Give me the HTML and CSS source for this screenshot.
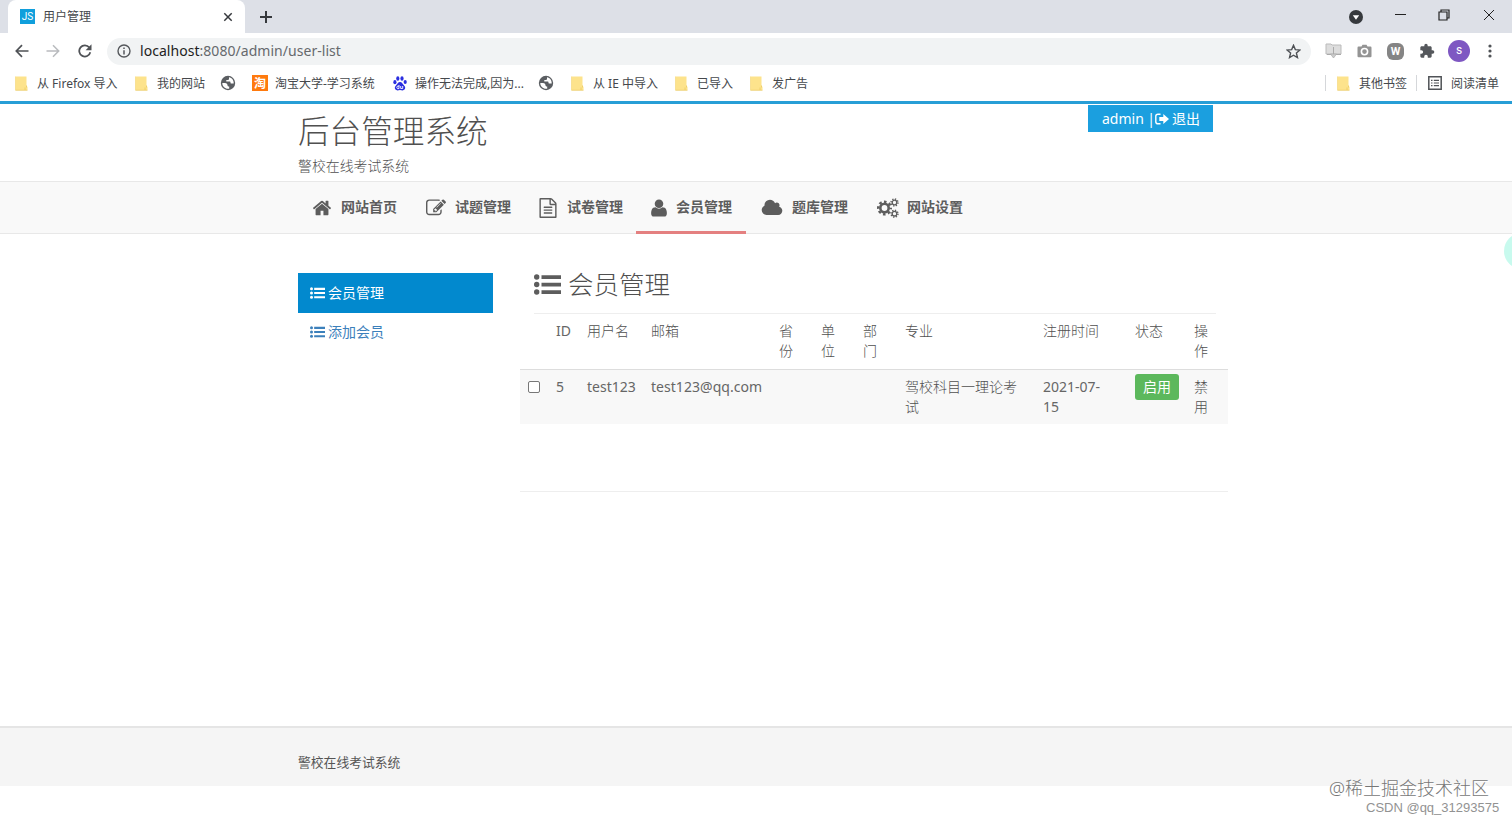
FILE: index.html
```html
<!DOCTYPE html>
<html lang="zh-CN">
<head>
<meta charset="utf-8">
<title>用户管理</title>
<link rel="stylesheet" href="styles.css">
</head>
<body>
<svg class="defs" width="0" height="0">
  <symbol id="folder" viewBox="0 0 13 15"><path d="M.5.5h11v9l1 1.500v3h-12z" fill="#fde38c"/><path d="M.5 14.300h12M11.500 9.500v2M10 14v-2.500" stroke="#eccb62" stroke-width=".8" fill="none"/><path d="M.4.500v13.800" stroke="#f3d678" stroke-width=".7"/></symbol>
  <symbol id="globe" viewBox="0 0 16 16"><circle cx="8" cy="8" r="7.200" fill="#5b5e62"/><path d="M2.300 8h2.600c1.900 0 2.600 1 2.600 2.300 0 1 .8 1.200 1.700 1.200v2.200C5.500 14.400 2.200 11.600 2.300 8zM9 2.300v1.400c0 .8-.6 1.300-1.400 1.300H6.300v1.500H9.500c.8 0 1 .5 1 1.300 0 .6.700.8 1.300.8h1.900C14 5.400 11.800 2.700 9 2.300z" fill="#fff"/></symbol>
  <symbol id="list" viewBox="0 0 27 21"><circle cx="2.700" cy="3" r="2.700"/><circle cx="2.700" cy="10.500" r="2.700"/><circle cx="2.700" cy="18" r="2.700"/><path d="M7.500 1.200H27v3.700H7.500zM7.500 8.700H27v3.700H7.500zM7.500 16.200H27v3.700H7.500z"/></symbol>
</svg>

<header class="browser">
  <div class="tabstrip">
    <div class="tab">
      <span class="favicon">JS</span>
      <span class="tab-title">用户管理</span>
      <svg class="tab-close" viewBox="0 0 10 10"><path d="M1.300 1.300l7.400 7.400M8.700 1.300L1.300 8.700" stroke="#36393d" stroke-width="1.500"/></svg>
    </div>
    <svg class="tab-new" viewBox="0 0 12 12"><path d="M6 0v12M0 6h12" stroke="#36393d" stroke-width="2"/></svg>
    <div class="window-buttons">
      <svg class="w-menu" viewBox="0 0 14 14"><circle cx="7" cy="7" r="7" fill="#36393d"/><path d="M3.800 5.200h6.400L7 9.700z" fill="#fff"/></svg>
      <svg class="w-min" viewBox="0 0 11 12"><path d="M0 5.500h11" stroke="#222"/></svg>
      <svg class="w-max" viewBox="0 0 12 12"><path d="M1 3h8v8H1zM3 3V1h8v8H9" fill="none" stroke="#222" stroke-width="1.200"/></svg>
      <svg class="w-close" viewBox="0 0 12 12"><path d="M1 1l10 10M11 1L1 11" stroke="#222"/></svg>
    </div>
  </div>
  <div class="toolbar">
    <svg class="t-back" viewBox="0 0 14 14"><path d="M13.500 7H1.500M7 1.200L1.300 7 7 12.800" fill="none" stroke="#4f5256" stroke-width="1.700"/></svg>
    <svg class="t-fwd" viewBox="0 0 14 14"><path d="M.5 7h12M7 1.200L12.700 7 7 12.800" fill="none" stroke="#b9bbbe" stroke-width="1.500"/></svg>
    <svg class="t-reload" viewBox="0 0 14 14"><path d="M12.300 8.300A5.600 5.600 0 1 1 11.300 3.500" fill="none" stroke="#505357" stroke-width="1.800"/><path d="M13.500.3v6H7.600z" fill="#505357"/></svg>
    <div class="omnibox">
      <svg class="o-info" viewBox="0 0 14 14"><circle cx="7" cy="7" r="6" fill="none" stroke="#55585c" stroke-width="1.400"/><path d="M7 6.200v4.200M7 3.400v1.500" stroke="#55585c" stroke-width="1.500"/></svg>
      <span class="url"><b>localhost</b>:8080/admin/user-list</span>
      <svg class="o-star" viewBox="0 0 14 14"><path d="M7 1.200l1.700 4 4.300.400-3.300 2.800 1 4.300L7 10.500l-3.700 2.200 1-4.300L1 5.600l4.300-.4z" fill="none" stroke="#4e5155" stroke-width="1.300"/></svg>
    </div>
    <div class="extensions">
      <svg class="e-save" viewBox="0 0 17 16"><path d="M1 1h5l1 1h9v9H1z" fill="#ddd" stroke="#bbb"/><path d="M2 11.500h14M8.500 4v9" stroke="#aaa"/><path d="M5.500 11h6l-3 4z" fill="#ccc" stroke="#aaa" stroke-width=".7"/></svg>
      <svg class="e-cam" viewBox="0 0 15 14"><path d="M1.500 2.500h3L5.500.7h4l1 1.800h3Q14.500 2.500 14.500 3.700v8.600q0 1-1.200 1H1.700q-1.200 0-1.200-1V3.700q0-1.200 1-1.200z" fill="#949494"/><circle cx="7.500" cy="7.600" r="3.100" fill="none" stroke="#fff" stroke-width="1.600"/></svg>
      <span class="e-w">W</span>
      <svg class="e-puzzle" viewBox="0 0 24 24"><path d="M20.500 11H19V7c0-1.100-.9-2-2-2h-4V3.500a2.500 2.500 0 0 0-5 0V5H4c-1.100 0-2 .9-2 2v3.800h1.500a2.700 2.700 0 0 1 0 5.400H2V20c0 1.100.9 2 2 2h3.800v-1.500a2.700 2.700 0 0 1 5.400 0V22H17c1.100 0 2-.9 2-2v-4h1.500a2.500 2.500 0 0 0 0-5z" fill="#55585c"/></svg>
      <span class="avatar">s</span>
      <svg class="e-more" viewBox="0 0 4 14"><g fill="#505357"><circle cx="2" cy="2" r="1.600"/><circle cx="2" cy="7" r="1.600"/><circle cx="2" cy="12" r="1.600"/></g></svg>
    </div>
  </div>
  <nav class="bookmarks">
    <span class="bm bm1"><svg class="folder"><use href="#folder"/></svg><span class="bt">从 Firefox 导入</span></span>
    <span class="bm bm2"><svg class="folder"><use href="#folder"/></svg><span class="bt">我的网站</span></span>
    <svg class="globe"><use href="#globe"/></svg>
    <span class="bm bm3"><span class="tao">淘</span><span class="bt">淘宝大学-学习系统</span></span>
    <span class="bm bm4"><svg class="paw" viewBox="0 0 14 15"><g fill="#2b2fe0"><ellipse cx="1.900" cy="6.200" rx="1.600" ry="2.100"/><ellipse cx="4.800" cy="2.500" rx="1.600" ry="2.200"/><ellipse cx="9" cy="2.500" rx="1.600" ry="2.200"/><ellipse cx="12.200" cy="6" rx="1.600" ry="2.100"/><path d="M7 6c2 0 2.300 1.800 3.700 3 1.700 1.400 2 3.300.8 4.600-1.200 1.400-3 .5-4.500.5s-3.200.9-4.500-.5c-1.200-1.300-.8-3.200.8-4.600C4.700 7.800 5 6 7 6z"/></g><path d="M6 9v3.600H4.400q-1.200-1.300 0-2.400H6M7.700 10v2.500h2V10" fill="none" stroke="#fff" stroke-width=".9"/></svg><span class="bt">操作无法完成,因为...</span></span>
    <svg class="globe g2"><use href="#globe"/></svg>
    <span class="bm bm5"><svg class="folder"><use href="#folder"/></svg><span class="bt">从 IE 中导入</span></span>
    <span class="bm bm6"><svg class="folder"><use href="#folder"/></svg><span class="bt">已导入</span></span>
    <span class="bm bm7"><svg class="folder"><use href="#folder"/></svg><span class="bt">发广告</span></span>
    <span class="bm other"><svg class="folder"><use href="#folder"/></svg><span class="bt">其他书签</span></span>
    <span class="bm reading"><svg class="read" viewBox="0 0 14 14"><path d="M.8.800h12.400v12.400H.8z" fill="none" stroke="#505357" stroke-width="1.500"/><path d="M3 4.300h1.500M3 7h1.500M3 9.700h1.500M5.800 4.300H11M5.800 7H11M5.800 9.700H11" stroke="#505357" stroke-width="1.200"/></svg><span class="bt">阅读清单</span></span>
  </nav>
</header>

<div class="page">
  <div class="masthead">
    <div class="brand">
      <h1>后台管理系统</h1>
      <p>警校在线考试系统</p>
    </div>
    <div class="account"><span class="who">admin</span><span class="bar">|</span><svg class="signout" viewBox="0 0 14 12"><path d="M5.500 1.200H3Q.8 1.200.8 3.300v5.400Q.8 10.800 3 10.800h2.500" fill="none" stroke="#fff" stroke-width="1.400"/><path d="M4.300 4h4V.9L14 6l-5.700 5.100V8h-4z" fill="#fff"/></svg><span>退出</span></div>
  </div>
  <nav class="mainnav">
    <a class="n1"><svg viewBox="0 0 1792 1792"><path d="M1472 992v480q0 26-19 45t-45 19h-384v-384h-256v384h-384q-26 0-45-19t-19-45v-480q0-1 .5-3t.5-3l575-474 575 474q1 2 1 6zm223-69l-62 74q-8 9-21 11h-3q-13 0-21-7l-692-577-692 577q-12 8-24 7-13-2-21-11l-62-74q-8-10-7-23.500t11-21.500l719-599q32-26 76-26t76 26l244 204v-195q0-14 9-23t23-9h192q14 0 23 9t9 23v408l219 182q10 8 11 21.500t-7 23.500z"/></svg>网站首页</a>
    <a class="n2"><svg viewBox="0 0 1792 1792"><path d="M888 1184l116-116-152-152-116 116v56h96v96h56zm440-720q-16-16-33 1l-350 350q-17 17-1 33t33-1l350-350q17-17 1-33zm80 594v190q0 119-84.500 203.500t-203.500 84.500h-832q-119 0-203.500-84.500t-84.500-203.500v-832q0-119 84.500-203.500t203.500-84.500h832q63 0 117 25 15 7 18 23 3 17-9 29l-49 49q-14 14-32 8-23-6-45-6h-832q-66 0-113 47t-47 113v832q0 66 47 113t113 47h832q66 0 113-47t47-113v-126q0-13 9-22l64-64q15-15 35-7t20 29zm-96-738l288 288-672 672h-288v-288zm444 132l-92 92-288-288 92-92q28-28 68-28t68 28l152 152q28 28 28 68t-28 68z"/></svg>试题管理</a>
    <a class="n3"><svg viewBox="0 0 1792 1792"><path d="M1596 380q28 28 48 76t20 88v1152q0 40-28 68t-68 28h-1344q-40 0-68-28t-28-68v-1600q0-40 28-68t68-28h896q40 0 88 20t76 48zm-444-244v376h376q-10-29-22-41l-313-313q-12-12-41-22zm384 1528v-1024h-416q-40 0-68-28t-28-68v-416h-768v1536h1280zm-1024-864q0-14 9-23t23-9h704q14 0 23 9t9 23v64q0 14-9 23t-23 9h-704q-14 0-23-9t-9-23v-64zm736 224q14 0 23 9t9 23v64q0 14-9 23t-23 9h-704q-14 0-23-9t-9-23v-64q0-14 9-23t23-9h704zm0 256q14 0 23 9t9 23v64q0 14-9 23t-23 9h-704q-14 0-23-9t-9-23v-64q0-14 9-23t23-9h704z"/></svg>试卷管理</a>
    <a class="n4 active"><svg viewBox="0 0 1792 1792"><path d="M1600 1399q0 109-62.500 187t-150.500 78h-982q-88 0-150.500-78t-62.500-187q0-85 8.500-160.500t31.500-152 58.500-131 94-89 198.500-34.500q131 128 313 128t313-128q140 0 198.500 34.500t94 89 58.500 131 31.500 152 8.500 160.500zm-320-887q0 159-112.500 271.500t-271.500 112.500-271.500-112.500-112.500-271.500 112.500-271.500 271.500-112.500 271.500 112.500 112.500 271.500z"/></svg>会员管理</a>
    <a class="n5"><svg viewBox="0 0 2048 1792"><path d="M1984 1152q0 159-112.500 271.500t-271.500 112.500h-1088q-185 0-316.500-131.500t-131.500-316.500q0-132 71-241.500t187-163.500q-2-28-2-43 0-212 150-362t362-150q158 0 286.500 88t187.500 230q70-62 166-62 106 0 181 75t75 181q0 75-41 138 129 30 213 134.500t84 239.500z"/></svg>题库管理</a>
    <a class="n6"><svg viewBox="0 0 22 20"><g fill="none" stroke="#5d5d5d"><circle cx="7.500" cy="10" r="4.200" stroke-width="2.600"/><circle cx="7.500" cy="10" r="6.300" stroke-width="2.400" stroke-dasharray="2.600 2.348" stroke-dashoffset="1.300"/><circle cx="17.500" cy="4.500" r="2.300" stroke-width="1.300"/><circle cx="17.500" cy="4.500" r="3.500" stroke-width="1.400" stroke-dasharray="1.300 1.449"/><circle cx="17.500" cy="15.700" r="2.300" stroke-width="1.300"/><circle cx="17.500" cy="15.700" r="3.500" stroke-width="1.400" stroke-dasharray="1.300 1.449"/></g></svg>网站设置</a>
  </nav>
  <main class="content">
    <aside class="side">
      <a class="on"><svg><use href="#list"/></svg>会员管理</a>
      <a><svg><use href="#list"/></svg>添加会员</a>
    </aside>
    <section class="panel">
      <h2><svg><use href="#list"/></svg>会员管理</h2>
      <table>
        <colgroup><col class="c1"><col class="c2"><col class="c3"><col class="c4"><col class="c5"><col class="c5"><col class="c5"><col class="c6"><col class="c7"><col class="c8"><col class="c5"></colgroup>
        <thead><tr><th></th><th class="lat">ID</th><th>用户名</th><th>邮箱</th><th>省份</th><th>单位</th><th>部门</th><th>专业</th><th>注册时间</th><th>状态</th><th>操作</th></tr></thead>
        <tbody><tr><td><span class="check"></span></td><td class="lat">5</td><td class="lat">test123</td><td class="lat mail">test123@qq.com</td><td></td><td></td><td></td><td>驾校科目一理论考试</td><td class="lat">2021-07-<br>15</td><td><span class="badge">启用</span></td><td>禁用</td></tr></tbody>
      </table>
      <div class="pager"></div>
    </section>
  </main>
  <footer class="foot">警校在线考试系统</footer>
</div>
<div class="bubble"></div>
<div class="mark mark1">@稀土掘金技术社区</div>
<div class="mark mark2">CSDN @qq_31293575</div>
</body>
</html>
```
FILE: styles.css
```css
* { box-sizing: border-box; }
html, body { margin: 0; height: 821px; overflow: hidden; }
body { background: #fff; color: #505050; font: 300 14px/20px "Noto Sans", "Noto Sans CJK SC", sans-serif; position: relative; }
svg { display: block; flex: none; }
.defs { position: absolute; }
h1, h2, p { margin: 0; font-weight: 300; }

.browser { height: 101px; font-weight: 400; color: #45484c; }
.tabstrip { height: 33px; background: #dde0e7; display: flex; align-items: center; padding-left: 8px; }
.tab { width: 237px; height: 33px; background: #fff; border-radius: 8px 8px 0 0; display: flex; align-items: center; padding: 0 12px; }
.favicon { width: 15px; height: 15px; background: #109fdc; color: #fff; font: 10px/15px Roboto, sans-serif; text-align: center; }
.tab-title { font-size: 12px; margin-left: 8px; }
.tab-close { width: 10px; height: 10px; margin-left: auto; }
.tab-new { width: 12px; height: 12px; margin-left: 15px; }
.window-buttons { display: flex; align-items: center; margin-left: auto; padding-right: 17px; }
.w-menu { width: 14px; height: 14px; margin-right: 32px; }
.w-min { width: 11px; height: 12px; margin-right: 32px; }
.w-max { width: 12px; height: 12px; margin-right: 33px; }
.w-close { width: 12px; height: 12px; }
.window-buttons svg:not(.w-menu) { margin-top: -4px; }

.toolbar { height: 35px; display: flex; align-items: center; padding: 1px 18px 0 15px; }
.t-back, .t-fwd, .t-reload { width: 14px; height: 14px; margin-right: 17px; }
.t-fwd { margin-right: 18px; }
.t-reload { margin-right: 15px; }
.omnibox { width: 1204px; height: 27px; border-radius: 14px; background: #f1f3f4; display: flex; align-items: center; padding: 0 10px; color: #66696d; }
.o-info { width: 14px; height: 14px; margin-right: 9px; }
.url { font-size: 14px; letter-spacing: .04px; }
.url b { font-weight: 400; color: #222; }
.o-star { width: 15px; height: 15px; margin-left: auto; }
.extensions { display: flex; align-items: center; margin-left: 14px; }
.e-save { width: 17px; height: 16px; margin-right: 15px; }
.e-cam { width: 15px; height: 14px; margin-right: 15px; }
.e-w { width: 17px; height: 17px; border-radius: 6px; background: #858585; color: #fff; font: bold 11px/17px Roboto, sans-serif; text-align: center; margin-right: 15px; }
.e-puzzle { width: 16px; height: 16px; margin-right: 13px; }
.avatar { width: 22px; height: 22px; border-radius: 50%; background: #7e57c2; color: #fff; font: 12px/21px Roboto, sans-serif; text-align: center; margin-right: 18px; }
.e-more { width: 4px; height: 14px; }

.bookmarks { height: 32px; display: flex; align-items: center; padding: 0 13px 2px 15px; font-size: 12px; }
.bm { display: flex; align-items: center; }
.bt { white-space: nowrap; padding-top: 1px; }
.folder { width: 13px; height: 15px; margin-right: 9px; }
.globe { width: 16px; height: 16px; margin-right: 16px; }
.bm1 { width: 120px; }
.bm2 { width: 85px; }
.bm3 { width: 141px; }
.bm4 { width: 145px; }
.g2 { margin-right: 17px; }
.bm5 { width: 104px; }
.bm6 { width: 75px; }
.tao { width: 16px; height: 16px; background: #ff7a0e; color: #fff; font: bold 12px/16px "Noto Sans CJK SC", sans-serif; text-align: center; margin-right: 7px; }
.paw { width: 14px; height: 15px; margin-right: 8px; }
.other { margin-left: auto; border-left: 1px solid #d5d7da; height: 16px; padding-left: 11px; width: 91px; }
.reading { border-left: 1px solid #d5d7da; height: 16px; padding-left: 11px; }
.read { width: 14px; height: 14px; margin-right: 9px; }

.page { border-top: 3px solid #279ed6; height: 720px; }
.masthead { height: 77px; padding-left: 298px; display: flex; justify-content: space-between; }
.brand h1 { font-size: 31.600px; line-height: 38px; padding-top: 8px; height: 53px; }
.brand p { font-size: 13.900px; line-height: 18px; }
.account { width: 125px; height: 27px; margin: 1px 299px 0 0; background: #1b9fdf; color: #fff; display: flex; align-items: center; padding-left: 14px; font-weight: 400; }
.who { width: 45px; }
.bar { width: 8px; text-align: center; }
.signout { width: 14px; height: 12px; margin-right: 3px; }
.mainnav { height: 53px; background: #f9f9f9; border-top: 1px solid #e8e8e8; border-bottom: 1px solid #e8e8e8; display: flex; padding-left: 298px; font-weight: 700; color: #5d5d5d; }
.mainnav a { display: flex; align-items: center; border-bottom: 3px solid transparent; height: 52px; white-space: nowrap; padding-top: 1px; }
.mainnav a.active { border-color: #e48080; }
.mainnav svg { width: 20px; height: 20px; fill: #5d5d5d; margin: 2px 9px 0 0; }
.n1 { width: 114px; padding-left: 14px; }
.n2 { width: 114px; padding-left: 14px; }
.n3 { width: 110px; padding-left: 12px; }
.n4 { width: 110px; padding-left: 13px; }
.n5 { width: 116px; padding-left: 15px; }
.n6 { padding-left: 15px; }
.mainnav .n4 svg { margin-right: 7px; }
.mainnav .n5 svg { width: 22px; }
.mainnav .n6 svg { width: 22px; margin-right: 8px; }
.content { height: 492px; display: flex; padding: 39px 0 0 298px; }
.side { width: 195px; }
.side a { height: 38px; display: flex; align-items: center; padding-left: 12px; color: #3c80bb; font-weight: 400; }
.side a.on { background: #0289ce; color: #fff; height: 40px; }
.side svg { width: 15px; height: 12px; margin-right: 3px; fill: currentColor; }
.panel { width: 708px; margin-left: 27px; }
.panel h2 { margin: 0 12px 0 14px; height: 41px; display: flex; align-items: center; padding-bottom: 18px; font-size: 25.500px; border-bottom: 1px solid #eee; }
.panel h2 svg { width: 27px; height: 21px; margin-right: 7px; fill: #5d5d5d; }
table { width: 708px; table-layout: fixed; border-collapse: separate; border-spacing: 0; }
.c1 { width: 28px; } .c2 { width: 31px; } .c3 { width: 64px; } .c4 { width: 128px; }
.c5 { width: 42px; } .c6 { width: 138px; } .c7 { width: 92px; } .c8 { width: 59px; }
th, td { padding: 7px 8px; vertical-align: top; text-align: left; font-weight: 300; }
th { height: 56px; border-bottom: 1px solid #ddd; }
td { height: 54px; background: #f8f8f8; }
.lat { white-space: nowrap; font-weight: 400; color: #666; }
.mail { letter-spacing: .04px; }
.check { display: block; width: 12px; height: 12px; border: 1px solid #777; border-radius: 2px; background: #fff; margin-top: 4px; }
.badge { display: block; width: 44px; height: 26px; margin: -3px 0 -10px; background: #5cb85c; color: #fff; border-radius: 3px; text-align: center; line-height: 26px; font-weight: 400; }
.pager { height: 68px; border-bottom: 1px solid #eee; }
.foot { height: 60px; background: #f5f5f5; border-top: 2px solid #e5e5e5; padding: 24px 0 0 298px; font-size: 12.800px; font-weight: 400; color: #555; }
.bubble { position: absolute; right: -28px; top: 233px; width: 36px; height: 36px; border-radius: 50%; background: #c8faee; }
.mark { position: absolute; white-space: nowrap; text-shadow: 1px 1px 0 #fff; }
.mark1 { left: 1329px; top: 776px; font-size: 18px; line-height: 24px; color: #777; }
.mark2 { left: 1366px; top: 799px; font: 13px/17px "Liberation Sans", sans-serif; color: #929292; }
```
